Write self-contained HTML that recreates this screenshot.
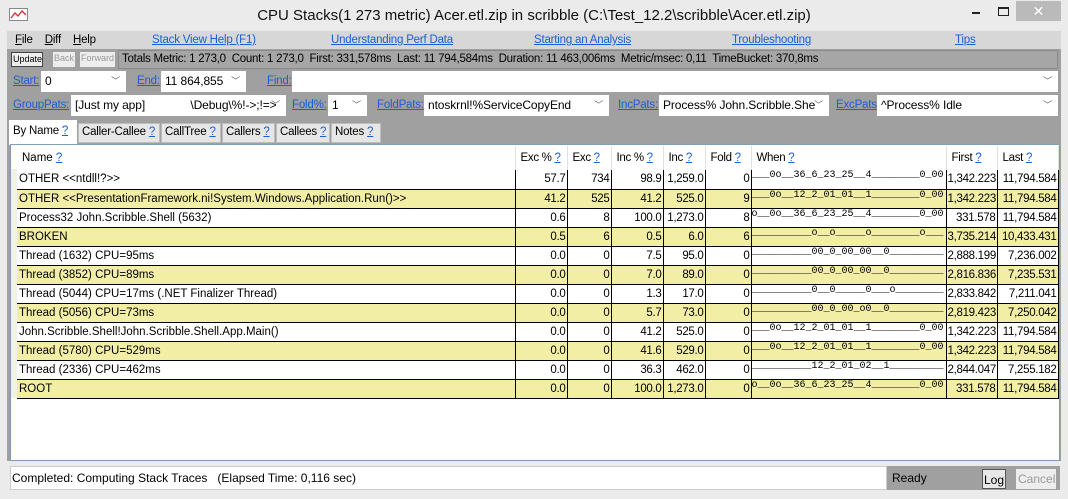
<!DOCTYPE html>
<html><head><meta charset="utf-8"><style>
*{box-sizing:border-box;margin:0;padding:0}
body{width:1068px;height:499px;overflow:hidden;background:#ebebeb;font-family:"Liberation Sans",sans-serif;font-size:12px;color:#000;position:relative}
.a{position:absolute;white-space:nowrap}
a,.lk{color:#1a5fd6;text-decoration:underline}
.l{font-size:11.5px;letter-spacing:-0.2px}
.cb{background:#fff;position:absolute;height:21px;padding:3px 4px;font-size:12px;white-space:nowrap;overflow:hidden;letter-spacing:-0.1px}
.cb .dd{position:absolute;right:6px;top:3px;font-size:9px;color:#666}
.tab{position:absolute;top:123px;height:20px;background:#e6e6e6;border:1px solid #bdbdbd;padding:2px 3px;font-size:11.5px;white-space:nowrap;overflow:hidden;letter-spacing:-0.2px}
table{border-collapse:collapse;position:absolute;left:17px;top:146px;font-size:11.5px;table-layout:fixed;width:1041px}
td{height:19px;border-right:1px solid #000;border-bottom:1px solid #000;padding:0 1px;text-align:right;white-space:nowrap;overflow:hidden;letter-spacing:-0.3px}
td:first-child{text-align:left;letter-spacing:0;padding-left:2px}
tr.h td{border:none;border-right:1px solid #e0e0e0;height:24px;text-align:left;padding-left:5px;background:#fff}
tr.y td{background:#f2eea6}
td.w{font-family:"Liberation Mono",monospace;font-size:10px;text-align:left;padding:0;vertical-align:top;line-height:12px;letter-spacing:0}
.q{color:#1a5fd6;text-decoration:underline}
</style></head><body>
<svg class="a" style="left:9px;top:8px" width="20" height="14"><rect x="0.5" y="0.5" width="18" height="12" fill="#fff" stroke="#888"/><polyline points="2,10 6,5 9,8 13,3 17,7" fill="none" stroke="#d03030" stroke-width="1.3"/></svg>
<div class="a" style="left:0;width:1068px;top:7px;text-align:center;font-size:15px;color:#111">CPU Stacks(1 273 metric) Acer.etl.zip in scribble (C:\Test_12.2\scribble\Acer.etl.zip)</div>
<div class="a" style="left:972px;top:12px;width:8px;height:2px;background:#222"></div>
<div class="a" style="left:998px;top:7px;width:11px;height:9px;border:1px solid #222;border-top-width:2px"></div>
<div class="a" style="left:1016px;top:1px;width:45px;height:20px;background:#bababa;color:#fff;text-align:center;font-size:14px;line-height:20px">✕</div>
<div class="a" style="left:7px;top:31px;width:1054px;height:430px;background:#a0a0a0"></div>
<div class="a" style="left:7px;top:31px;width:1054px;height:18px;background:#d7d7d7"></div>
<div class="a l" style="left:15px;top:34px"><u>F</u>ile &nbsp;&nbsp; <u>D</u>iff &nbsp;&nbsp; <u>H</u>elp</div>
<div class="a lk l" style="left:152px;top:34px">Stack View Help (F1)</div>
<div class="a lk l" style="left:331px;top:34px">Understanding Perf Data</div>
<div class="a lk l" style="left:534px;top:34px">Starting an Analysis</div>
<div class="a lk l" style="left:732px;top:34px">Troubleshooting</div>
<div class="a lk l" style="left:955px;top:34px">Tips</div>
<div class="a" style="left:11px;top:52px;width:32px;height:15px;background:#eee;border:1px solid #444;font-size:9px;padding:1px 1px">Update</div>
<div class="a" style="left:53px;top:52px;width:22px;height:15px;background:#ededed;font-size:9px;color:#999;padding:1px 1px">Back</div>
<div class="a" style="left:80px;top:52px;width:35px;height:15px;background:#ededed;font-size:9px;color:#999;padding:1px 1px">Forward</div>
<div class="a" style="left:118px;top:50px;width:940px;height:19px;border:1px solid #8a8a8a;background:#a6a6a6"></div>
<div class="a" style="left:122px;top:53px;font-size:11.5px;letter-spacing:-0.25px">Totals Metric: 1 273,0&nbsp; Count: 1 273,0&nbsp; First: 331,578ms&nbsp; Last: 11 794,584ms&nbsp; Duration: 11 463,006ms&nbsp; Metric/msec: 0,11&nbsp; TimeBucket: 370,8ms</div>
<div class="a lk l" style="left:13px;top:75px">Start:</div>
<div class="cb" style="left:41px;top:71px;width:85px">0<span class="dd">﹀</span></div>
<div class="a lk l" style="left:137px;top:75px">End:</div>
<div class="cb" style="left:161px;top:71px;width:85px">11 864,855<span class="dd">﹀</span></div>
<div class="a lk l" style="left:267px;top:75px">Find:</div>
<div class="cb" style="left:292px;top:71px;width:766px"><span class="dd">﹀</span></div>
<div class="a lk l" style="left:13px;top:99px">GroupPats:</div>
<div class="cb" style="left:71px;top:95px;width:215px">[Just my app]&nbsp;&nbsp;&nbsp;&nbsp;&nbsp;&nbsp;&nbsp;&nbsp;&nbsp;&nbsp;&nbsp;&nbsp;&nbsp;&nbsp;\Debug\%!-&gt;;!=&gt;<span class="dd">﹀</span></div>
<div class="a lk l" style="left:292px;top:99px">Fold%:</div>
<div class="cb" style="left:328px;top:95px;width:39px">1<span class="dd">﹀</span></div>
<div class="a lk l" style="left:377px;top:99px">FoldPats:</div>
<div class="cb" style="left:424px;top:95px;width:185px">ntoskrnl!%ServiceCopyEnd<span class="dd">﹀</span></div>
<div class="a lk l" style="left:618px;top:99px">IncPats:</div>
<div class="cb" style="left:659px;top:95px;width:170px">Process% John.Scribble.She<span class="dd">﹀</span></div>
<div class="a lk l" style="left:836px;top:99px">ExcPats:</div>
<div class="cb" style="left:877px;top:95px;width:181px">^Process% Idle<span class="dd">﹀</span></div>
<div class="tab" style="left:9px;top:120px;height:25px;width:68px;background:#fff;border-color:#fff;padding-top:4px">By Name <span class="q">?</span></div>
<div class="tab" style="left:78px;width:82px">Caller-Callee <span class="q">?</span></div>
<div class="tab" style="left:161px;width:60px">CallTree <span class="q">?</span></div>
<div class="tab" style="left:222px;width:53px">Callers <span class="q">?</span></div>
<div class="tab" style="left:276px;width:54px">Callees <span class="q">?</span></div>
<div class="tab" style="left:331px;width:50px">Notes <span class="q">?</span></div>
<div class="a" style="left:10px;top:144px;width:1050px;height:317px;background:#fff;border:1px solid #7f9db9"></div>
<div class="a" style="left:11px;top:169px;width:6px;height:229px;background:#f0f0f0"></div>
<table>
<colgroup><col style="width:498px"><col style="width:52px"><col style="width:44px"><col style="width:52px"><col style="width:42px"><col style="width:46px"><col style="width:195px"><col style="width:51px"><col style="width:61px"></colgroup>
<tr class="h"><td>Name <span class="q">?</span></td><td>Exc % <span class="q">?</span></td><td>Exc <span class="q">?</span></td><td>Inc % <span class="q">?</span></td><td>Inc <span class="q">?</span></td><td>Fold <span class="q">?</span></td><td>When <span class="q">?</span></td><td>First <span class="q">?</span></td><td>Last <span class="q">?</span></td></tr>
<tr><td>OTHER &lt;&lt;ntdll!?&gt;&gt;</td><td>57.7</td><td>734</td><td>98.9</td><td>1,259.0</td><td>0</td><td class="w">___0o__36_6_23_25__4________0_00</td><td>1,342.223</td><td>11,794.584</td></tr>
<tr class="y"><td>OTHER &lt;&lt;PresentationFramework.ni!System.Windows.Application.Run()&gt;&gt;</td><td>41.2</td><td>525</td><td>41.2</td><td>525.0</td><td>9</td><td class="w">___0o__12_2_01_01__1________0_00</td><td>1,342.223</td><td>11,794.584</td></tr>
<tr><td>Process32 John.Scribble.Shell (5632)</td><td>0.6</td><td>8</td><td>100.0</td><td>1,273.0</td><td>8</td><td class="w">o__0o__36_6_23_25__4________0_00</td><td>331.578</td><td>11,794.584</td></tr>
<tr class="y"><td>BROKEN</td><td>0.5</td><td>6</td><td>0.5</td><td>6.0</td><td>6</td><td class="w">__________o__o_____o________o___</td><td>3,735.214</td><td>10,433.431</td></tr>
<tr><td>Thread (1632) CPU=95ms</td><td>0.0</td><td>0</td><td>7.5</td><td>95.0</td><td>0</td><td class="w">__________00_0_00_00__0_________</td><td>2,888.199</td><td>7,236.002</td></tr>
<tr class="y"><td>Thread (3852) CPU=89ms</td><td>0.0</td><td>0</td><td>7.0</td><td>89.0</td><td>0</td><td class="w">__________00_0_00_00__0_________</td><td>2,816.836</td><td>7,235.531</td></tr>
<tr><td>Thread (5044) CPU=17ms (.NET Finalizer Thread)</td><td>0.0</td><td>0</td><td>1.3</td><td>17.0</td><td>0</td><td class="w">__________0__0_____0___o________</td><td>2,833.842</td><td>7,211.041</td></tr>
<tr class="y"><td>Thread (5056) CPU=73ms</td><td>0.0</td><td>0</td><td>5.7</td><td>73.0</td><td>0</td><td class="w">__________00_0_00_o0__0_________</td><td>2,819.423</td><td>7,250.042</td></tr>
<tr><td>John.Scribble.Shell!John.Scribble.Shell.App.Main()</td><td>0.0</td><td>0</td><td>41.2</td><td>525.0</td><td>0</td><td class="w">___0o__12_2_01_01__1________0_00</td><td>1,342.223</td><td>11,794.584</td></tr>
<tr class="y"><td>Thread (5780) CPU=529ms</td><td>0.0</td><td>0</td><td>41.6</td><td>529.0</td><td>0</td><td class="w">___0o__12_2_01_01__1________0_00</td><td>1,342.223</td><td>11,794.584</td></tr>
<tr><td>Thread (2336) CPU=462ms</td><td>0.0</td><td>0</td><td>36.3</td><td>462.0</td><td>0</td><td class="w">__________12_2_01_02__1_________</td><td>2,844.047</td><td>7,255.182</td></tr>
<tr class="y"><td>ROOT</td><td>0.0</td><td>0</td><td>100.0</td><td>1,273.0</td><td>0</td><td class="w">o__0o__36_6_23_25__4________0_00</td><td>331.578</td><td>11,794.584</td></tr>
</table>
<div class="a" style="left:7px;top:461px;width:1054px;height:32px;background:#ebebeb"></div>
<div class="a" style="left:10px;top:466px;width:877px;height:24px;background:#fff;border:1px solid #ccc;padding:4px 1px;font-size:12px">Completed: Computing Stack Traces &nbsp; (Elapsed Time: 0,116 sec)</div>
<div class="a" style="left:887px;top:466px;width:173px;height:24px;background:#a0a0a0"></div>
<div class="a" style="left:892px;top:471px;font-size:12px">Ready</div>
<div class="a" style="left:982px;top:469px;width:24px;height:20px;background:#e8e8e8;border:1px solid #555;font-size:12px;padding:3px 1px">Log</div>
<div class="a" style="left:1016px;top:469px;width:40px;height:20px;background:#ededed;font-size:12px;color:#999;padding:3px 2px">Cancel</div>
</body></html>
